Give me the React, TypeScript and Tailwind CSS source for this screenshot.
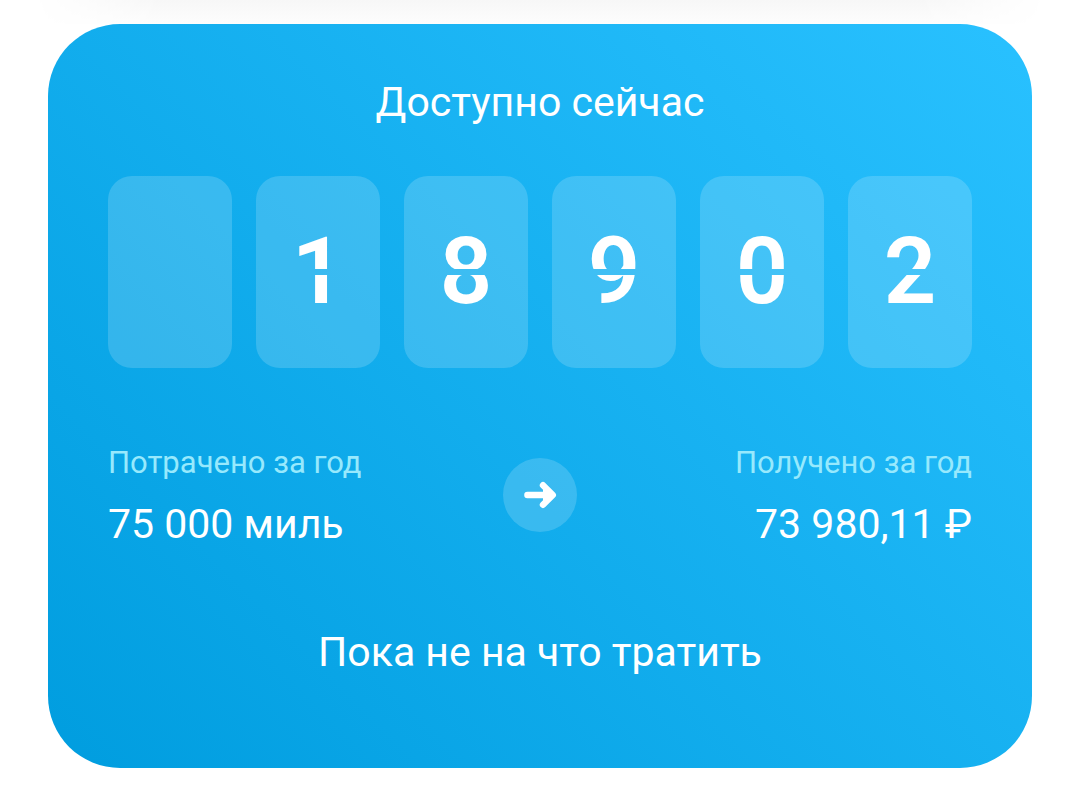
const digits = ['', '1', '8', '9', '0', '2'];

export default function App() {
  return (
    <div className="min-h-screen bg-white font-[Roboto,sans-serif] text-white">
      <div className="h-6 bg-linear-to-b from-[#f7f7f7] to-[#fdfdfd] mask-[linear-gradient(to_right,transparent_3%,#000_15%,#000_85%,transparent_97%)]" />
      <main className="mx-12 rounded-[72px] bg-linear-45/srgb from-[#009ddf] to-[#29c1ff] px-[60px] pt-[54px] pb-[92px]">
        <h1 className="text-center text-[41px] leading-[48px]">Доступно сейчас</h1>

        <div className="mt-[50px] grid grid-cols-6 gap-6">
          {digits.map((digit, i) => (
            <Digit key={i} value={digit} />
          ))}
        </div>

        <div className="mt-[75px] grid grid-cols-[1fr_auto_1fr] items-center">
          <Total label="Потрачено за год" value="75 000 миль" />
          <span className="flex size-[74px] items-center justify-center rounded-full bg-white/17">
            <svg viewBox="0 0 34 30" className="h-[30px] w-[34px]" fill="none" stroke="currentColor" strokeWidth="6.4" strokeLinecap="round" strokeLinejoin="round">
              <path d="M4.4 15H29M20 5.2L29.8 15L20 24.8" />
              <path d="M20 9L29 15L20 21Z" fill="currentColor" stroke="none" />
            </svg>
          </span>
          <Total label="Получено за год" value="73 980,11 ₽" align="text-right" />
        </div>

        <p className="mt-[81px] text-center text-[41px] leading-[48px]">Пока не на что тратить</p>
      </main>
    </div>
  );
}

// The mask leaves a thin gap across the middle, like the hinge of a flip counter
function Digit({ value }: { value: string }) {
  return (
    <div className="flex h-48 items-center justify-center rounded-3xl bg-white/17">
      <span className="mask-[linear-gradient(#000_47px,transparent_47px,transparent_53px,#000_53px)] text-[92px] leading-[100px] font-[560]">
        {value}
      </span>
    </div>
  );
}

function Total({ label, value, align = 'text-left' }: { label: string; value: string; align?: string }) {
  return (
    <div className={align}>
      <p className="text-[31px] leading-10 text-[#97e9fd]">{label}</p>
      <p className="mt-[18px] text-[41px] leading-[46px]">{value}</p>
    </div>
  );
}
